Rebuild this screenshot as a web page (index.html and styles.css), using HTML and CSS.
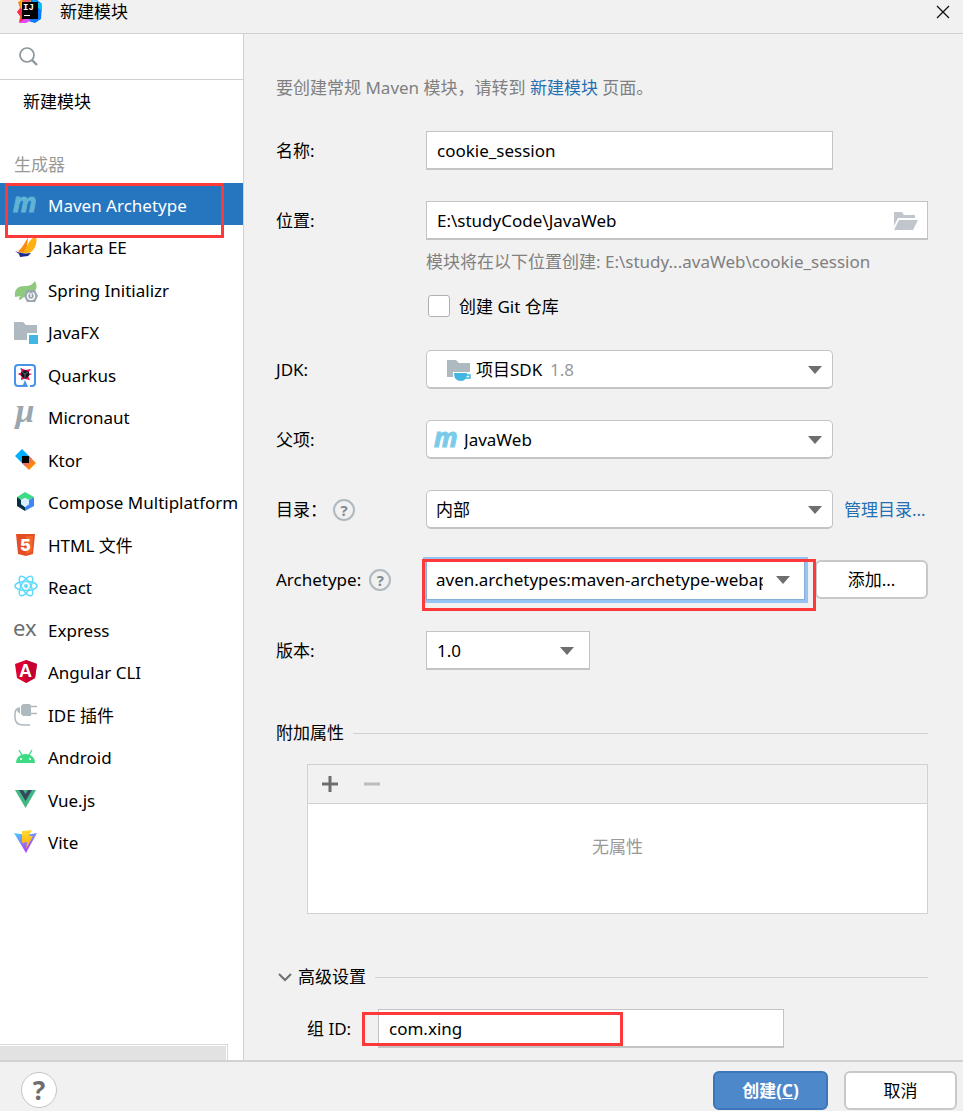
FILE: index.html
```html
<!DOCTYPE html>
<html lang="zh-CN">
<head>
    <meta charset="UTF-8">
    <meta name="viewport" content="width=device-width, initial-scale=1.0">
    <title>新建模块</title>
    <link rel="stylesheet" href="styles.css">
</head>
<body>
    <div class="dialog">
        <header class="titlebar">
            <svg class="app-icon" viewBox="0 0 26 26">
                <path d="M1 3 L8 0 L13 5 L9 24 L2 23 L3 17 L0 13 L3 9 Z" fill="#fc801d"/>
                <path d="M0 13 L6 6 L10 20 L2 24 L4 18 Z" fill="#fe2857"/>
                <path d="M3 0 H15 L12 8 L4 10 Z" fill="#fdb60d"/>
                <path d="M5 0 H14 L12 5 L6 4 Z" fill="#f9576b"/>
                <path d="M14 0 L19 0 L25 5 L24 20 L18 24 L11 22 Z" fill="#087cfa"/>
                <path d="M15 0 L20 3 L25 5 V12 L20 8 Z" fill="#07c3f2"/>
                <path d="M2 24 L9 19 L14 21 L9 24 Z" fill="#e04af7"/>
                <rect x="5" y="3" width="16" height="17" fill="#000"/>
                <text class="ij" x="6" y="11">IJ</text>
                <rect x="7" y="16" width="6" height="1" fill="#fff"/>
            </svg>
            <h1>新建模块</h1>
            <button class="close" type="button" aria-label="关闭">
                <svg viewBox="0 0 14 14"><path d="M1 1 L13 13 M13 1 L1 13" fill="none" stroke="#111" stroke-width="1.3"/></svg>
            </button>
        </header>

        <div class="content">
            <aside class="sidebar">
                <label class="search">
                    <svg viewBox="0 0 20 20"><circle cx="8" cy="8" r="7" fill="none" stroke="#8c979e" stroke-width="1.7"/><path d="M13 13 L18 18" stroke="#8c979e" stroke-width="2.4"/></svg>
                    <input type="search" aria-label="搜索">
                </label>
                <a class="new-module" href="#">新建模块</a>
                <h2>生成器</h2>
                <ul class="generators">
                    <li class="selected">
                        <a href="#"><svg viewBox="0 0 24 24"><text class="maven" x="-1" y="18">m</text></svg>Maven Archetype</a>
                        <span class="mark mark-generator"></span>
                    </li>
                    <li><a href="#"><svg viewBox="0 0 24 24">
                        <path d="M4 15 C9 12 11 5 14 2 C13 8 14 12 9 17 C7 17 5 16 4 15 Z" fill="#fb8a10"/>
                        <path d="M8 17 C14 14 12 5 22 0 C24 8 20 15 15 17 Z" fill="#fdb012"/>
                        <path d="M1 15 C6 17 10 18 17 17 L14 20 L6 21 L5 18 Z" fill="#1b2a8a"/>
                    </svg>Jakarta EE</a></li>
                    <li><a href="#"><svg viewBox="0 0 24 24">
                        <path d="M1 18 C0 10 4 7 11 7 C16 7 19 5 21 2 C23 6 23 9 21 12 H15 L10 18 L6 21 C4 20 5 18 7 17 C5 17 3 18 1 18 Z" fill="#8fc97e"/>
                        <path d="M13 11 H21 L24 17 L21 23 H13 L10 17 Z" fill="#9aa7b0"/>
                        <circle cx="17" cy="17" r="3.5" fill="none" stroke="#fff" stroke-width="1.5"/>
                        <path d="M17 12 V17" stroke="#9aa7b0" stroke-width="3"/><path d="M17 14 V18" stroke="#fff" stroke-width="1.3"/>
                    </svg>Spring Initializr</a></li>
                    <li><a href="#"><svg viewBox="0 0 24 24">
                        <path d="M0 1 H9 L12 4 H23 V12 H13 V19 H0 Z" fill="#aeb9c0"/><rect x="15" y="14" width="9" height="9" fill="#40b6e0"/>
                    </svg>JavaFX</a></li>
                    <li><a href="#"><svg viewBox="0 0 24 24">
                        <path d="M9 22 H4 Q1 22 1 19 V4 Q1 1 4 1 H18 Q21 1 21 4 V19 Q21 22 18 22 H16" fill="none" stroke="#4695eb" stroke-width="2"/>
                        <path d="M11 16 L14 23 H8 Z" fill="#4695eb"/>
                        <path d="M6 4 L11 6 V15 L7 16 L8 12 L4 10 L8 9 Z" fill="#4695eb"/>
                        <path d="M17 5 L11 6 V15 L16 16 L14 12 L18 10 L14 9 Z" fill="#ff004a"/>
                        <path d="M4 10 L8 8 V12 Z M7 4 L11 6 L8 8 Z M7 16 L8 12 L11 14 Z" fill="#ff004a"/>
                        <path d="M11 6 L15 8 V12 L11 15 L7 12 V8 Z" fill="#15171d"/>
                        <path d="M11 15 V10 L8 8 M11 10 L14 8" fill="none" stroke="#7b8790" stroke-width="0.7"/>
                    </svg>Quarkus</a></li>
                    <li><a href="#"><svg viewBox="0 0 24 24"><text class="micronaut" x="1" y="16">µ</text></svg>Micronaut</a></li>
                    <li><a href="#"><svg viewBox="0 0 24 24">
                        <defs>
                            <linearGradient id="ktor-a" x1="0" y1="0" x2="1" y2="1"><stop offset="0.4" stop-color="#00afff"/><stop offset="0.8" stop-color="#5282ff"/><stop offset="1" stop-color="#945dff"/></linearGradient>
                            <linearGradient id="ktor-b" x1="0" y1="0" x2="1" y2="1"><stop offset="0.1" stop-color="#c757bc"/><stop offset="0.4" stop-color="#e9705f"/><stop offset="0.7" stop-color="#ff8a00"/></linearGradient>
                        </defs>
                        <path d="M1 7 L8 0 L18 10 L11 17 Z" fill="url(#ktor-a)"/>
                        <path d="M8 14 L15 7 L22 14 L15 21 Z" fill="url(#ktor-b)"/>
                        <rect x="8" y="7" width="7" height="7" fill="#000"/>
                    </svg>Ktor</a></li>
                    <li><a href="#"><svg viewBox="0 0 24 24">
                        <path d="M11 1 L20 6 L15 9 L11 7 L7 9 L3 6 Z" fill="#3ddc84"/>
                        <path d="M3 6 L7 9 V13 L11 16 V20 L3 15 Z" fill="#083042"/>
                        <path d="M20 6 L15 9 V13 L11 16 V20 L20 15 Z" fill="#4285f4"/>
                        <path d="M11 7 L15 9 V13 L11 16 L7 13 V9 Z" fill="#d7effe"/>
                    </svg>Compose Multiplatform</a></li>
                    <li><a href="#"><svg viewBox="0 0 24 24">
                        <path d="M2 0 H21 L19 20 L12 22 L4 20 Z" fill="#e44d26"/><path d="M12 2 H19 L18 18 L12 20 Z" fill="#f16529"/>
                        <text class="html5" x="6" y="17">5</text>
                    </svg>HTML 文件</a></li>
                    <li><a href="#"><svg viewBox="0 0 24 24">
                        <g fill="none" stroke="#61dafb" stroke-width="1.5"><ellipse cx="12" cy="10" rx="11" ry="4.5"/><ellipse cx="12" cy="10" rx="11" ry="4.5" transform="rotate(60 12 10)"/><ellipse cx="12" cy="10" rx="11" ry="4.5" transform="rotate(120 12 10)"/></g>
                        <circle cx="12" cy="10" r="2" fill="#61dafb"/>
                    </svg>React</a></li>
                    <li><a href="#"><svg viewBox="0 0 24 24"><text class="express" x="-1" y="17">ex</text></svg>Express</a></li>
                    <li><a href="#"><svg viewBox="0 0 24 24">
                        <path d="M12 -1 L23 3 L21 17 L12 22 L3 17 L1 3 Z" fill="#dd0031"/><path d="M12 -1 L23 3 L21 17 L12 22 Z" fill="#c3002f"/>
                        <text class="angular" x="5" y="16">A</text>
                    </svg>Angular CLI</a></li>
                    <li><a href="#"><svg viewBox="0 0 24 24">
                        <path d="M9 0 H15 Q17 0 17 2 V12 H9 L7 10 V2 Z" fill="#aeb9c0"/>
                        <path d="M17 2.5 H23 M17 9.5 H23" stroke="#aeb9c0" stroke-width="1.5"/>
                        <path d="M6 4 Q1 4 1 10 V13 Q1 21 9 21 H16" fill="none" stroke="#aeb9c0" stroke-width="1.5"/><path d="M6 3 V10 L2 6 Z" fill="#aeb9c0"/>
                    </svg>IDE 插件</a></li>
                    <li><a href="#"><svg viewBox="0 0 24 24">
                        <path d="M2 17 C2 5 21 5 21 17 Z" fill="#3ddc84"/><path d="M5 4 L8 9 M18 4 L15 9" stroke="#3ddc84" stroke-width="1.3"/>
                        <circle cx="7" cy="13" r="1" fill="#fff"/><circle cx="16" cy="13" r="1" fill="#fff"/>
                    </svg>Android</a></li>
                    <li><a href="#"><svg viewBox="0 0 24 24">
                        <path d="M1 1 H22 L11.5 19 Z" fill="#41b883"/><path d="M5 1 H9 L11.5 5 L14 1 H18 L11.5 12 Z" fill="#35495e"/>
                    </svg>Vue.js</a></li>
                    <li><a href="#"><svg viewBox="0 0 24 24">
                        <defs>
                            <linearGradient id="vite-a" x1="0" y1="0" x2="0.6" y2="1"><stop offset="0" stop-color="#41d1ff"/><stop offset="1" stop-color="#bd34fe"/></linearGradient>
                            <linearGradient id="vite-b" x1="0" y1="0" x2="0" y2="1"><stop offset="0" stop-color="#ffdd35"/><stop offset="1" stop-color="#ffa800"/></linearGradient>
                        </defs>
                        <path d="M0 2 L12 4 L23 2 L12 22 Z" fill="url(#vite-a)"/>
                        <path d="M8 0 L18 -1 L15 5 L19 5 L12 18 L13 11 L8 12 Z" fill="url(#vite-b)"/>
                    </svg>Vite</a></li>
                </ul>
                <div class="scrollbar"></div>
            </aside>

            <main class="settings">
                <p class="info">要创建常规 Maven 模块，请转到 <a href="#">新建模块</a> 页面。</p>

                <form class="form" id="module-form">
                    <label for="name">名称:</label>
                    <input class="field" id="name" type="text" value="cookie_session">

                    <label for="location">位置:</label>
                    <div class="location wide">
                        <input class="field" id="location" type="text" value="E:\studyCode\JavaWeb">
                        <button class="browse" type="button" aria-label="浏览">
                            <svg viewBox="0 0 24 18"><path d="M0 0 H8 L10 3 H21 V6 H4 L0 14 Z" fill="#c0c6cb"/><path d="M5 8 H24 L19 18 H0 Z" fill="#c0c6cb"/></svg>
                        </button>
                    </div>
                    <div class="extras wide">
                        <p>模块将在以下位置创建: E:\study...avaWeb\cookie_session</p>
                        <label class="check"><input type="checkbox">创建 Git 仓库</label>
                    </div>

                    <label for="jdk">JDK:</label>
                    <div class="combo combo-jdk">
                        <select id="jdk"><option>项目SDK</option></select>
                        <svg class="combo-icon" viewBox="0 0 24 24">
                            <path d="M0 2 H9 L12 5 H23 V14 H6 V19 H0 Z" fill="#aeb9c0"/>
                            <path d="M7 15 H20 Q20 23 14 23 Q7 23 7 15 Z" fill="#40b6e0"/><path d="M18 17 H23 V20 H18" fill="none" stroke="#40b6e0" stroke-width="1.5"/>
                        </svg>
                        <span class="jdk-version">1.8</span>
                        <svg class="arrow" viewBox="0 0 14 8"><path d="M0 0 H14 L7 8 Z"/></svg>
                    </div>

                    <label for="parent">父项:</label>
                    <div class="combo combo-parent">
                        <select id="parent"><option>JavaWeb</option></select>
                        <svg class="combo-icon" viewBox="0 0 24 24"><text class="maven" x="-1" y="19">m</text></svg>
                        <svg class="arrow" viewBox="0 0 14 8"><path d="M0 0 H14 L7 8 Z"/></svg>
                    </div>

                    <div class="with-help catalog-label">
                        <label for="catalog">目录：</label>
                        <button class="hint" type="button">?</button>
                    </div>
                    <div class="combo">
                        <select id="catalog"><option>内部</option></select>
                        <svg class="arrow" viewBox="0 0 14 8"><path d="M0 0 H14 L7 8 Z"/></svg>
                    </div>
                    <a class="manage" href="#">管理目录...</a>

                    <div class="with-help">
                        <label for="archetype">Archetype:</label>
                        <button class="hint" type="button">?</button>
                    </div>
                    <div class="archetype wide">
                        <div class="combo-edit">
                            <input id="archetype" type="text" value="aven.archetypes:maven-archetype-webapp">
                            <button type="button" aria-label="展开"><svg viewBox="0 0 14 8"><path d="M0 0 H14 L7 8 Z"/></svg></button>
                        </div>
                        <button class="btn" type="button">添加...</button>
                        <span class="mark mark-archetype"></span>
                    </div>

                    <label for="version">版本:</label>
                    <div class="combo combo-version">
                        <select id="version"><option>1.0</option></select>
                        <svg class="arrow" viewBox="0 0 14 8"><path d="M0 0 H14 L7 8 Z"/></svg>
                    </div>
                </form>

                <h3>附加属性</h3>
                <div class="properties">
                    <div class="toolbar">
                        <button type="button" aria-label="添加"><svg viewBox="0 0 16 16"><path d="M8 0 V16 M0 8 H16" stroke="#6e6e6e" stroke-width="3"/></svg></button>
                        <button type="button" aria-label="移除" disabled><svg viewBox="0 0 16 16"><path d="M0 8 H16" stroke="#bdbdbd" stroke-width="3"/></svg></button>
                    </div>
                    <p>无属性</p>
                </div>

                <h3 class="advanced"><svg viewBox="0 0 14 14"><path d="M1 4 L7 10 L13 4" fill="none" stroke="#6e6e6e" stroke-width="2"/></svg>高级设置</h3>
                <div class="group">
                    <label for="group-id">组 ID:</label>
                    <input class="field" id="group-id" type="text" value="com.xing" form="module-form">
                    <span class="mark mark-group"></span>
                </div>
            </main>
        </div>

        <footer class="footer">
            <button class="help" type="button">?</button>
            <button class="btn primary" type="submit" form="module-form">创建(<u>C</u>)</button>
            <button class="btn" type="button">取消</button>
        </footer>
    </div>
</body>
</html>
```
FILE: styles.css
```css
* { box-sizing: border-box; }
body, h1, h2, h3, p, ul { margin: 0; padding: 0; }
body, input, select, button {
    font-family: "Noto Sans", "Noto Sans CJK SC", sans-serif;
    font-size: 17px;
    line-height: 24px;
    color: #000;
}
h1, h2, h3 { font-size: 17px; font-weight: normal; }
ul { list-style: none; }
svg { display: block; flex: none; overflow: visible; }
button { padding: 0; border: 0; background: none; }
a { color: #2470b3; text-decoration: none; }
text { font-family: "Noto Sans", sans-serif; }

.dialog {
    display: flex;
    flex-direction: column;
    min-height: 100vh;
    background: #f1f1f1;
}

/* title bar */
.titlebar {
    display: flex;
    align-items: center;
    height: 34px;
    padding: 0 13px 10px 17px;
    border-bottom: 1px solid #d1d1d1;
}
.app-icon { width: 26px; height: 26px; }
.titlebar h1 { flex: 1; margin-left: 17px; }
.close svg { width: 14px; height: 14px; }
.ij { font: bold 9px "Liberation Mono", monospace; fill: #fff; }

.content { display: flex; flex: 1; }

/* generator list */
.sidebar {
    display: flex;
    flex-direction: column;
    flex: none;
    width: 244px;
    background: #fff;
    border-right: 1px solid #d1d1d1;
}
.search {
    display: flex;
    align-items: center;
    gap: 8px;
    height: 46px;
    padding: 0 19px;
    border-bottom: 1px solid #d1d1d1;
}
.search svg { width: 20px; height: 20px; }
.search input {
    flex: 1;
    min-width: 0;
    border: 0;
    outline: 0;
}
.new-module { padding: 10px 23px; color: #000; }
.sidebar h2 { padding: 29px 14px 6px; color: #999; }
.generators li { position: relative; height: 42px; }
.generators li:nth-child(even) { height: 43px; }
.generators a {
    display: flex;
    align-items: center;
    gap: 10px;
    height: 100%;
    padding: 3px 0 0 14px;
    overflow: hidden;
    color: #000;
    white-space: nowrap;
}
.generators svg { width: 24px; height: 24px; }
.generators .selected a { background: #2675bf; color: #fff; }
.maven {
    font-size: 26px;
    font-weight: bold;
    font-style: italic;
    fill: #7acbe9;
    stroke: #7acbe9;
}
.selected .maven { fill: #5fb4d6; stroke: #5fb4d6; }
.micronaut { font: italic bold 34px "Liberation Serif", serif; fill: #9aa7b0; }
.html5 { font: 900 16px Inter, sans-serif; fill: #fff; }
.express { font-size: 22px; fill: #6e6e6e; }
.angular { font: bold 18px "Liberation Sans", sans-serif; fill: #fff; }
.scrollbar {
    height: 16px;
    margin: auto 15px 0 0;
    background: #e2e2e2;
    border: 1px solid #d9d9d9;
    border-width: 1px 1px 0 0;
    box-shadow: inset -1px 1px #fff;
}

/* red highlight frames */
.mark {
    position: absolute;
    z-index: 1;
    border: 3px solid #fd3939;
    pointer-events: none;
}
.mark-generator { top: 0; left: 5px; width: 219px; height: 55px; }
.mark-archetype { top: -1px; left: -4px; width: 394px; height: 52px; }
.mark-group { top: 3px; left: 55px; width: 261px; height: 34px; }

/* settings form */
.settings { flex: 1; min-width: 0; padding: 42px 35px 10px 32px; }
.info { margin-bottom: 31px; color: #808080; }
.form {
    display: grid;
    grid-template-columns: 150px 1fr 95px;
    row-gap: 31px;
    align-items: center;
}
.form > label, .with-help { grid-column: 1; }
.wide { grid-column: 2 / 4; }
.field {
    width: 100%;
    height: 39px;
    padding: 0 10px;
    background: #fff;
    border: 1px solid #c4c4c4;
    border-bottom-width: 2px;
    border-radius: 0;
}
.location { position: relative; }
.browse { position: absolute; top: 11px; right: 10px; }
.browse svg { width: 24px; height: 18px; }
.extras { margin-top: -21px; color: #808080; }
.check {
    display: flex;
    align-items: center;
    gap: 9px;
    height: 25px;
    margin: 20px 0 0 2px;
    color: #000;
}
.check input {
    appearance: none;
    width: 22px;
    height: 22px;
    margin: 0 0 2px;
    background: #fff;
    border: 1px solid #b0b0b0;
    border-radius: 3px;
}

.combo { position: relative; }
.combo select {
    appearance: none;
    display: block;
    width: 100%;
    height: 39px;
    padding: 2px 36px 0 9px;
    background: #fff;
    border: 1px solid #c4c4c4;
    border-bottom-width: 2px;
    border-radius: 5px;
}
.arrow {
    position: absolute;
    top: 16px;
    right: 11px;
    width: 14px;
    height: 8px;
    fill: #6e6e6e;
    pointer-events: none;
}
.combo-icon {
    position: absolute;
    top: 8px;
    left: 9px;
    width: 24px;
    height: 24px;
    pointer-events: none;
}
.combo-parent select { padding-left: 37px; }
.combo-jdk select { padding-left: 49px; }
.combo-jdk .combo-icon { left: 21px; }
.jdk-version {
    position: absolute;
    top: 8px;
    left: 124px;
    color: #999;
    pointer-events: none;
}
.combo-version { width: 164px; }
.combo-version select { border-radius: 0; padding-left: 10px; }
.combo-version .arrow { right: 16px; }

.with-help { display: flex; align-items: center; gap: 8px; }
.catalog-label { gap: 6px; }
.hint {
    width: 22px;
    height: 22px;
    border: 2px solid #afb9bf;
    border-radius: 50%;
    color: #7f8b91;
    font-size: 15px;
    font-weight: bold;
    line-height: 18px;
}
.manage { padding-left: 11px; white-space: nowrap; }

.archetype {
    position: relative;
    display: flex;
    justify-content: space-between;
    align-items: flex-start;
    gap: 10px;
    height: 40px;
}
.combo-edit {
    display: flex;
    flex: 1;
    min-width: 0;
    height: 40px;
    background: #fff;
    border: 1px solid #87afda;
    box-shadow: 0 0 0 3px #97c3f3;
}
.combo-edit input {
    flex: 1;
    min-width: 0;
    padding: 0 0 0 9px;
    border: 0;
    outline: 0;
    background: none;
}
.combo-edit button { width: 41px; padding-left: 13px; }
.combo-edit svg { width: 14px; height: 8px; fill: #6e6e6e; }

.btn {
    width: 113px;
    height: 39px;
    padding-top: 1px;
    background: #fff;
    border: 2px solid #c8c8c8;
    border-radius: 6px;
}

/* section titles with a rule on the right */
h3 { display: flex; align-items: center; margin-top: 51px; }
h3::after {
    content: "";
    flex: 1;
    height: 1px;
    margin-left: 9px;
    background: #d1d1d1;
}
.properties {
    height: 150px;
    margin: 19px 0 0 31px;
    background: #fff;
    border: 1px solid #d1d1d1;
}
.toolbar {
    display: flex;
    gap: 26px;
    height: 39px;
    padding-left: 14px;
    background: #f1f1f1;
    border-bottom: 1px solid #d1d1d1;
}
.toolbar svg { width: 16px; height: 16px; }
.properties p { margin-top: 31px; color: #999; text-align: center; }
.advanced svg { width: 14px; height: 14px; margin: 0 6px 0 2px; }
.group {
    position: relative;
    display: flex;
    align-items: center;
    margin: 20px 0 0 31px;
}
.group label { width: 71px; flex: none; }
.group .field { flex: 1; margin-right: 144px; }

/* bottom buttons */
.footer {
    display: flex;
    align-items: center;
    gap: 16px;
    height: 51px;
    padding: 8px 6px 0 21px;
    border-top: 2px solid #d1d1d1;
}
.help {
    width: 36px;
    height: 36px;
    margin: 0 auto 2px 0;
    background: #fff;
    border: 1px solid #c4c4c4;
    border-radius: 50%;
    color: #6e6e6e;
    font-size: 26px;
    font-weight: bold;
    line-height: 34px;
}
.btn.primary {
    width: 115px;
    background: #4d89ca;
    border-color: #3b76b8;
    color: #fff;
    font-weight: bold;
}
```
